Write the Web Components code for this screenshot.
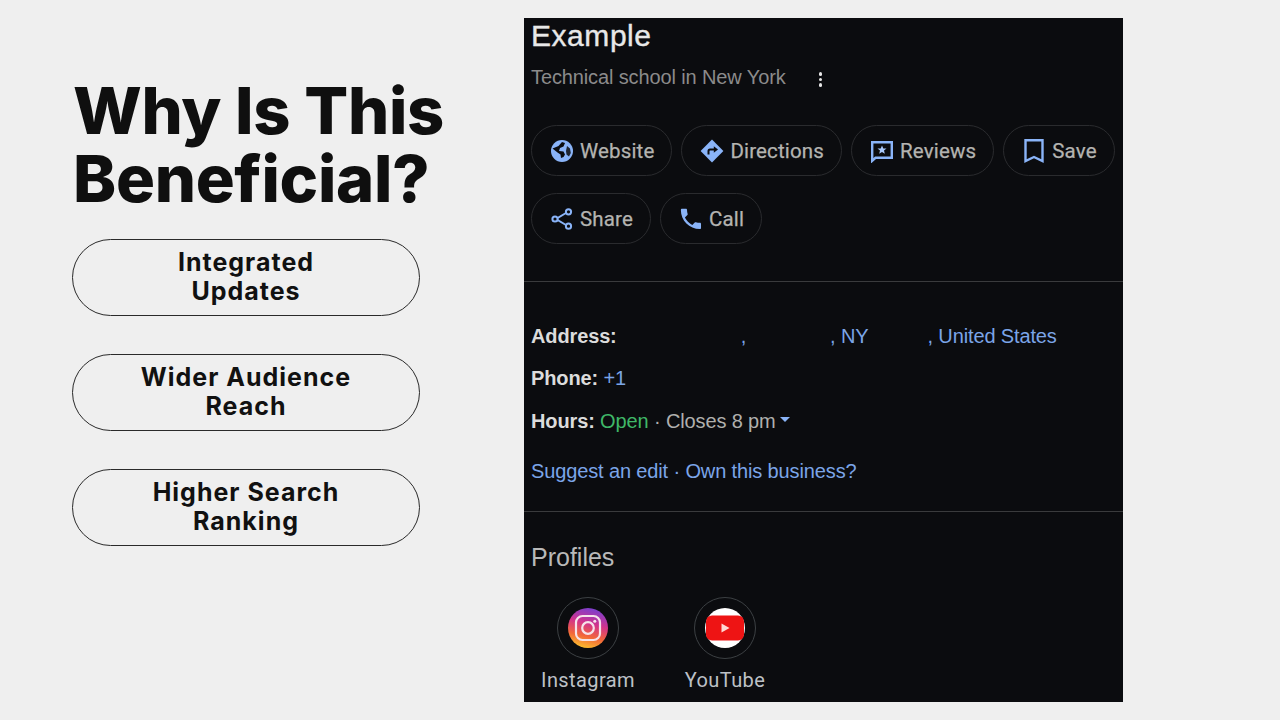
<!DOCTYPE html>
<html><head><meta charset="utf-8">
<style>
html,body{margin:0;height:100%}
body{width:1280px;height:720px;background:#efefef;overflow:hidden}
</style></head><body>
<slide-page>
  <benefit-column slot="left">
    <span slot="title">Why Is This<br>Beneficial?</span>
    <benefit-pill>Integrated<br>Updates</benefit-pill>
    <benefit-pill>Wider Audience<br>Reach</benefit-pill>
    <benefit-pill>Higher Search<br>Ranking</benefit-pill>
  </benefit-column>
  <business-panel slot="right"></business-panel>
</slide-page>

<script>
class SlidePage extends HTMLElement{constructor(){super();this.attachShadow({mode:'open'}).innerHTML=`
<style>:host{display:flex;width:1280px;height:720px;box-sizing:border-box;padding:18px 157px 18px 72px;justify-content:space-between;align-items:stretch}</style>
<slot name="left"></slot><slot name="right"></slot>`}}
class BenefitColumn extends HTMLElement{constructor(){super();this.attachShadow({mode:'open'}).innerHTML=`
<style>:host{display:flex;flex-direction:column;width:348px;padding-top:59px;box-sizing:border-box}
h1{margin:0 0 26px 1px;font:800 65px/68px Inter,"Liberation Sans",sans-serif;letter-spacing:-.3px;color:#0f0f0f;white-space:nowrap}
.list{display:flex;flex-direction:column;gap:38px}</style>
<h1><slot name="title"></slot></h1><div class="list"><slot></slot></div>`}}
class BenefitPill extends HTMLElement{constructor(){super();this.attachShadow({mode:'open'}).innerHTML=`
<style>:host{display:flex;align-items:center;justify-content:center;box-sizing:border-box;height:77px;border:1.5px solid #2a2a2a;border-radius:39px;text-align:center;font:700 25px/29px Inter,"Liberation Sans",sans-serif;letter-spacing:1px;color:#111;padding-bottom:2px}</style><div><slot></slot></div>`}}
class ActionChip extends HTMLElement{constructor(){super();this.attachShadow({mode:'open'}).innerHTML=`
<style>:host{display:inline-flex;align-items:center;gap:6px;box-sizing:border-box;height:51px;padding:1px 17px 0 18px;border:1px solid #2a2b2e;border-radius:26px;font:400 20.5px/1 Roboto,"Liberation Sans",sans-serif;letter-spacing:.15px;-webkit-text-stroke:.25px #b4b4b1;color:#b4b4b1;white-space:nowrap}
::slotted(svg){width:24px;height:24px;flex:none}</style><slot name="icon"></slot><slot></slot>`}}
class ProfileLink extends HTMLElement{constructor(){super();this.attachShadow({mode:'open'}).innerHTML=`
<style>:host{display:flex;flex-direction:column;align-items:center;width:124px;font:400 20px/24px Roboto,"Liberation Sans",sans-serif;letter-spacing:.4px;color:#bdc1c6}
.ring{width:60px;height:60px;border:1px solid #3c4043;border-radius:50%;display:flex;align-items:center;justify-content:center;margin-bottom:9px}
::slotted(svg){width:40px;height:40px}</style><div class="ring"><slot name="icon"></slot></div><slot></slot>`}}
class BusinessPanel extends HTMLElement{constructor(){super();this.attachShadow({mode:'open'}).innerHTML=`
<style>
:host{display:block;width:599px;height:684px;background:#0b0c0f;box-sizing:border-box;overflow:hidden;font-family:"Liberation Sans",Arial,sans-serif}
.pad{padding-left:7px}
.name{font-size:30px;line-height:36px;color:#e8e8e8;letter-spacing:.55px;-webkit-text-stroke:.35px #e8e8e8}
.type{display:flex;align-items:center;font-size:20px;line-height:24px;color:#8b8b8b;margin-top:11px;letter-spacing:-.12px}
.dots{display:flex;flex-direction:column;gap:2px;margin-left:33px;margin-top:5px}
.dots i{width:3.5px;height:3.5px;border-radius:50%;background:#e6e6e6}
.chips{display:flex;flex-wrap:wrap;gap:17px 9px;margin-top:36px}
hr{border:0;height:1px;background:#3a3b3d;margin:0}
.r1{margin-top:37px}
.info{font-size:20px;line-height:24px;color:#b0b0ae;letter-spacing:-.13px}
.info b{color:#dcdcdc;font-weight:700}
.info a{color:#7ba5e8}
.row{height:24px;margin-bottom:18.5px;white-space:nowrap;display:flex;align-items:center}
.sp{display:inline-block}
.open{color:#3fb768}
.caret{display:inline-block;width:0;height:0;border:5px solid transparent;border-top:5px solid #8ab4f8;border-bottom:0;margin-left:4px;margin-bottom:2px}
.links{color:#7ba5e8;margin-top:26px}
.h2{font-size:25px;line-height:30px;color:#b9b9b9;margin-top:30px}
.profiles{display:flex;margin-top:25px;margin-left:-5px;gap:13px}
</style>
<div class="pad name">Example</div>
<div class="pad type">Technical school in New York<span class="dots"><i></i><i></i><i></i></span></div>
<div class="pad chips">
 <action-chip><svg slot="icon" viewBox="0 0 24 24"><circle cx="12" cy="12" r="11" fill="#8ab4f8"/><path fill="#0b0c0f" d="M2.500 9.500 8.500 7l3.500-4 3 1-1.500 3.500-3.500 1.500-1 3 4.500.5 1.500 3-1.500 2.500-2.500 1-.5-3.500-3-2z"/><path fill="#0b0c0f" d="m17 7 3 2.500.8 4.500-1.800 3.500-2.500-2-.5-3.500z" opacity=".85"/></svg>Website</action-chip>
 <action-chip><svg slot="icon" viewBox="0 0 24 24"><path fill="#8ab4f8" d="M12 .6 .6 12 12 23.400 23.400 12z"/><path fill="none" stroke="#0b0c0f" stroke-width="2" d="M8.500 15.500v-3.500q0-1.500 1.500-1.500h5"/><path fill="#0b0c0f" d="M13.800 7.300 18 10.500l-4.200 3.200z"/></svg>Directions</action-chip>
 <action-chip><svg slot="icon" viewBox="0 0 24 24"><path fill="none" stroke="#8ab4f8" stroke-width="2.400" d="M2.200 3.200h19.600v15.600H5.500l-3.300 3z"/><path fill="#a9c8fa" d="m12 6.500 1.300 3h3.200l-2.500 2.100.8 3.200-2.800-1.700-2.800 1.700.8-3.200-2.500-2.100h3.200z"/></svg>Reviews</action-chip>
 <action-chip><svg slot="icon" viewBox="0 0 24 24"><path fill="none" stroke="#8ab4f8" stroke-width="2.400" d="M3.500 1.200h17v20.800L12 18l-8.500 4z"/></svg>Save</action-chip>
 <action-chip><svg slot="icon" viewBox="0 0 24 24"><path fill="none" stroke="#8ab4f8" stroke-width="2" d="M18.500 4.500 6 12l12.500 7.500"/><g fill="#0b0c0f" stroke="#8ab4f8" stroke-width="2"><circle cx="18.500" cy="4.800" r="2.600"/><circle cx="5" cy="12" r="2.600"/><circle cx="18.500" cy="19.200" r="2.600"/></g></svg>Share</action-chip>
 <action-chip><svg slot="icon" viewBox="0 0 24 24"><path fill="#8ab4f8" transform="translate(-1.500 -1.500) scale(1.120)" d="M6.620 10.790c1.440 2.830 3.760 5.140 6.590 6.590l2.200-2.200c.27-.27.67-.36 1.020-.24 1.120.37 2.330.57 3.570.57.55 0 1 .45 1 1V20c0 .55-.45 1-1 1-9.390 0-17-7.610-17-17 0-.55.45-1 1-1h3.500c.55 0 1 .45 1 1 0 1.250.2 2.450.57 3.570.11.35.03.74-.25 1.020l-2.200 2.200z"/></svg>Call</action-chip>
</div>
<hr class="r1">
<div class="pad info" style="padding-top:42px">
 <div class="row" style="margin-bottom:18px"><b>Address:</b><a><span class="sp" style="width:124px"></span>,<span class="sp" style="width:84px"></span>, NY<span class="sp" style="width:59px"></span>, United States</a></div>
 <div class="row"><b>Phone:</b><a>&nbsp;+1</a></div>
 <div class="row" style="margin-bottom:0"><b>Hours:</b>&nbsp;<span class="open">Open</span>&nbsp;· Closes 8 pm<span class="caret"></span></div>
 <div class="row links" style="margin-bottom:28px">Suggest an edit · Own this business?</div>
</div>
<hr>
<div class="pad h2">Profiles</div>
<div class="pad profiles">
 <profile-link><svg slot="icon" viewBox="0 0 40 40"><defs><linearGradient id="ig" x1=".35" y1="1" x2=".6" y2="0"><stop offset="0" stop-color="#fbc02d"/><stop offset=".3" stop-color="#f2663a"/><stop offset=".62" stop-color="#d2338c"/><stop offset="1" stop-color="#7a3fd0"/></linearGradient></defs><circle cx="20" cy="20" r="20" fill="url(#ig)"/><rect x="8" y="8" width="24" height="24" rx="6.500" fill="none" stroke="#f6e3ea" stroke-width="2.200"/><circle cx="20" cy="20" r="5.800" fill="none" stroke="#f6e3ea" stroke-width="2.200"/><circle cx="26.800" cy="13.200" r="1.500" fill="#f6e3ea"/></svg>Instagram</profile-link>
 <profile-link><svg slot="icon" viewBox="0 0 40 40"><circle cx="20" cy="20" r="20" fill="#fff"/><rect x="1" y="7.500" width="38" height="25" rx="6" fill="#ee1414"/><path fill="#ffd9d4" d="m16.500 15.500 8 4.500-8 4.500z"/></svg>YouTube</profile-link>
</div>`}}
customElements.define('slide-page',SlidePage);
customElements.define('benefit-column',BenefitColumn);
customElements.define('benefit-pill',BenefitPill);
customElements.define('action-chip',ActionChip);
customElements.define('profile-link',ProfileLink);
customElements.define('business-panel',BusinessPanel);
</script>
</body></html>
